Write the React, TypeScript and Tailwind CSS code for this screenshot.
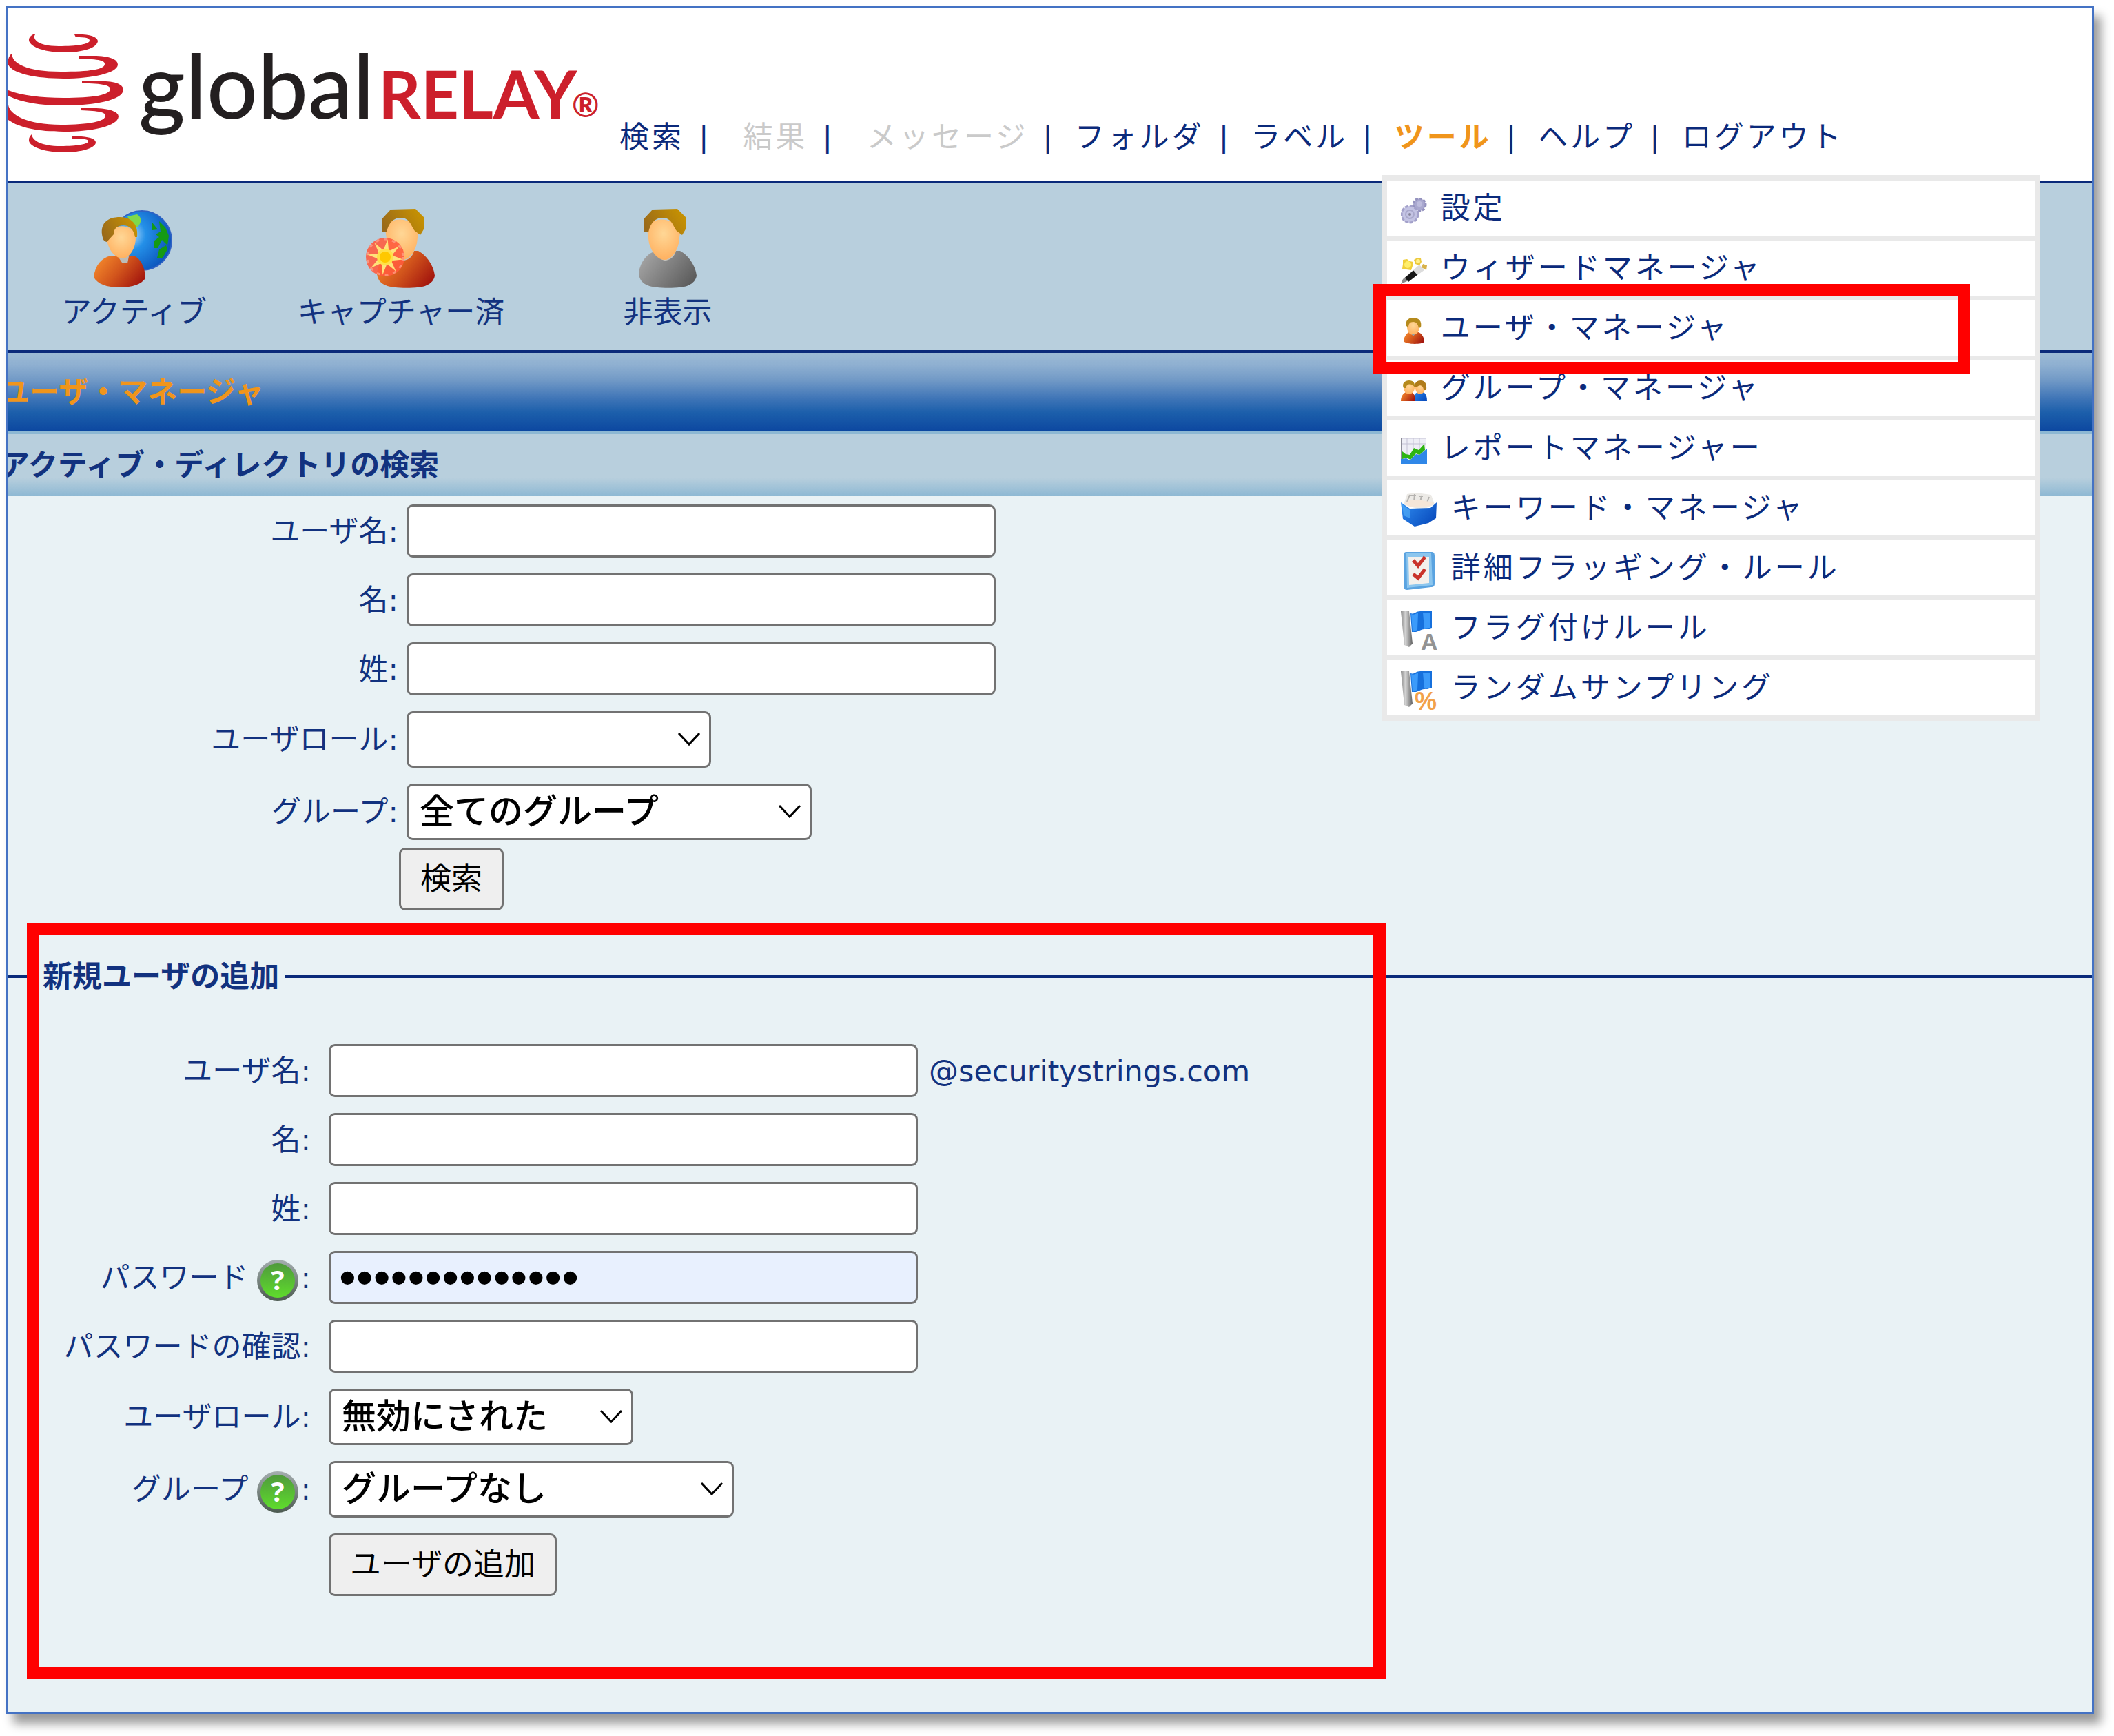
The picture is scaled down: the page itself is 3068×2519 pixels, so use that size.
import type { ReactNode } from "react";

const FONT =
  "font-['DejaVu_Sans','Noto_Sans_CJK_JP',sans-serif]";

/* ---------- logo ---------- */

function Logo() {
  return (
    <svg viewBox="12 12 876 230" className="h-[230px] w-[876px] shrink-0" role="img" aria-label="global RELAY">
      <g fill="#cc1f2b">
        <path d="M108 50 L120 50 C135 51 142 55 142 60 C140 70 120 76 93 76 C60 76 41 66 42 57 C43 53 46 50 52 49 C45 56 55 67 85 67 C112 67 130 64 130 59 C130 55 125 54 110 54Z" />
        <path d="M115 81 L140 81 C162 82 171 87 171 94 C170 106 135 114 92 114 C45 114 5 104 12 86 C13 82 15 79 18 77 C15 90 35 104 88 104 C130 104 152 101 152 93 C152 88 145 86 115 85Z" />
        <path d="M119 118 L150 118 C170 118 180 124 179 131 C177 145 140 153 92 153 C55 153 25 148 5 135 L5 128 C25 138 55 142 92 142 C135 142 160 138 160 129 C160 124 150 121 119 121Z" />
        <path d="M117 156 L140 157 C162 158 172 163 172 169 C171 183 135 191 92 191 C50 191 20 184 5 168 L12 152 C14 167 40 181 88 181 C130 181 153 176 153 168 C153 163 145 161 117 160Z" />
        <path d="M105 198 L118 198 C132 199 139 202 139 207 C138 215 118 221 93 221 C60 221 41 211 42 203 C42 199 44 197 46 195 C47 204 60 212 88 212 C112 212 128 209 128 205 C128 202 122 201 105 201Z" />
      </g>
      <text x="201" y="172" className="font-['Lato',sans-serif] text-[130px] font-medium" fill="#231f20">global</text>
      <text x="549" y="172" className="font-['Lato',sans-serif] text-[96px] font-bold" fill="#cc1f2b">RELAY</text>
      <text x="830" y="170" className="font-['Lato',sans-serif] text-[48px] font-bold" fill="#cc1f2b">®</text>
    </svg>
  );
}

/* ---------- toolbar icons ---------- */

function Defs() {
  return (
    <svg className="absolute size-0" aria-hidden="true">
      <defs>
        <linearGradient id="red-body" x1="0" y1="0.2" x2="1" y2="0.7">
          <stop offset="0" stopColor="#f58a2c" />
          <stop offset="0.5" stopColor="#d2551c" />
          <stop offset="1" stopColor="#a3160e" />
        </linearGradient>
        <linearGradient id="gray-body" x1="0" y1="0.2" x2="1" y2="0.7">
          <stop offset="0" stopColor="#a6a6a6" />
          <stop offset="1" stopColor="#5c5c5c" />
        </linearGradient>
        <linearGradient id="blue-body" x1="0" y1="0" x2="1" y2="0.6">
          <stop offset="0" stopColor="#2f8cf0" />
          <stop offset="1" stopColor="#0b4fc0" />
        </linearGradient>
        <radialGradient id="face" cx="0.5" cy="0.35" r="0.7">
          <stop offset="0" stopColor="#ffd796" />
          <stop offset="1" stopColor="#ffae5c" />
        </radialGradient>
        <linearGradient id="hair" x1="0" y1="0.6" x2="1" y2="0.2">
          <stop offset="0" stopColor="#9a6a1a" />
          <stop offset="1" stopColor="#c99400" />
        </linearGradient>
        <radialGradient id="globe" cx="0.3" cy="0.4" r="0.75">
          <stop offset="0" stopColor="#bfe0fa" />
          <stop offset="0.35" stopColor="#2490e8" />
          <stop offset="1" stopColor="#0a4fb8" />
        </radialGradient>
        <linearGradient id="help" x1="0" y1="0" x2="0" y2="1">
          <stop offset="0" stopColor="#4f9a3c" />
          <stop offset="1" stopColor="#5fdc2c" />
        </linearGradient>
        <linearGradient id="help-rim" x1="0" y1="0" x2="0" y2="1">
          <stop offset="0" stopColor="#a5aeb0" />
          <stop offset="1" stopColor="#4c5a50" />
        </linearGradient>
        <linearGradient id="pole" x1="0" y1="0" x2="1" y2="0">
          <stop offset="0" stopColor="#8a8a8a" />
          <stop offset="0.4" stopColor="#d4d4d4" />
          <stop offset="1" stopColor="#636363" />
        </linearGradient>
      </defs>
    </svg>
  );
}

function Person({ body }: { body: string }) {
  return (
    <g>
      <path d="M0 92 C3 76 12 64 26 61 L60 61 C73 68 83 84 84 97 C83 103 79 108 72 111 C62 116 24 116 13 111 C5 108 0 102 0 92Z" fill={body} />
      <path d="M26 62 L54 61 C52 70 44 75 38 75 C32 74 28 70 26 62Z" fill="#c6c4be" />
      <path d="M12 30 C13 10 56 10 60 34 L58 50 C54 66 45 74 37 74 C28 74 19 64 15 50Z" fill="url(#face)" />
      <path d="M8 34 L8 14 L20 1 L56 0 L69 13 L69 28 L63 38 L55 32 C50 26 48 13 35 13 C24 13 17 20 14 34Z" fill="url(#hair)" />
    </g>
  );
}

function ActiveIcon() {
  return (
    <svg viewBox="14 10 124 120" className="h-[120px] w-[124px]" aria-hidden="true">
      <circle cx="87" cy="59" r="43" fill="url(#globe)" stroke="#2f62c4" strokeWidth="2" />
      <path d="M66 24 L80 21 C88 26 86 34 80 40 L72 36Z" fill="#7fd94c" />
      <path d="M102 33 L110 43 L102 44Z M112 31 L121 40 L126 52 L124 66 L116 58 L110 70 L104 70 L104 60 L112 54 L107 50 L114 46Z M122 66 L124 72 L117 84 L109 84 L112 72Z" fill="#159a14" />
      <path d="M17 112 C19 95 28 84 42 81 L75 81 C87 86 92 102 92 114 C86 122 74 127 55 127 C36 127 22 122 17 112Z" fill="url(#red-body)" />
      <path d="M52 82 L68 82 L66 92 L58 91Z" fill="#bcbcb8" />
      <path d="M36 54 C38 34 76 32 78 54 C78 72 68 85 58 85 C47 84 36 70 36 54Z" fill="url(#face)" />
      <path d="M29 50 C27 33 38 25 55 25 C74 25 82 38 80 54 L77 54 C75 42 68 37 60 37 C51 37 46 42 46 50 L36 61 C31 60 30 56 29 50Z" fill="url(#hair)" />
    </svg>
  );
}

function CapturedIcon() {
  const rays = [0, 45, 90, 135, 180, 225, 270, 315];
  return (
    <svg viewBox="0 0 124 120" className="h-[120px] w-[124px]" aria-hidden="true">
      <g transform="translate(27 3)">
        <Person body="url(#red-body)" />
      </g>
      <circle cx="39" cy="73" r="28" fill="#ff5a3c" fillOpacity="0.88" />
      <circle cx="39" cy="73" r="26" fill="none" stroke="#ffb09a" strokeOpacity="0.6" strokeWidth="3" strokeDasharray="5 7" />
      {rays.map((angle) => (
        <path key={angle} d="M35 64 L39 47 L43 64Z" fill="#ffe27a" transform={`rotate(${angle + 8} 39 73)`} />
      ))}
      <circle cx="39" cy="73" r="12" fill="#ffe04a" />
      <circle cx="39" cy="73" r="8" fill="#ffc800" />
    </svg>
  );
}

function HiddenIcon() {
  return (
    <svg viewBox="0 0 124 120" className="h-[120px] w-[124px]" aria-hidden="true">
      <g transform="translate(20 3)">
        <Person body="url(#gray-body)" />
      </g>
    </svg>
  );
}

/* ---------- menu icons ---------- */

function SmallIcon({ children }: { children: ReactNode }) {
  return (
    <svg viewBox="0 0 38 38" className="mt-2 size-[38px] shrink-0" aria-hidden="true">
      {children}
    </svg>
  );
}

function LargeIcon({ children }: { children: ReactNode }) {
  return (
    <svg viewBox="0 0 53 58" className="mt-2 h-[58px] w-[53px] shrink-0 overflow-visible" aria-hidden="true">
      {children}
    </svg>
  );
}

const gearsIcon = (
  <SmallIcon>
    <circle cx="27" cy="10" r="9" fill="#a9a8cf" />
    <circle cx="27" cy="10" r="9" fill="none" stroke="#9492be" strokeWidth="3" strokeDasharray="4 2" />
    <circle cx="27" cy="9" r="4" fill="#bdbcdd" />
    <circle cx="13" cy="24" r="12" fill="#c3c3e3" stroke="#a3a1ca" strokeWidth="3" strokeDasharray="5 2" />
    <circle cx="13" cy="24" r="6" fill="none" stroke="#a9a8cc" strokeWidth="2" />
    <circle cx="13" cy="24" r="2" fill="#85849a" />
  </SmallIcon>
);

const wandIcon = (
  <SmallIcon>
    <path d="M0 38 L3 31 L17 19 L23 24 L9 34Z" fill="#8b8b8b" />
    <path d="M6 29 L19 18 L25 24 L11 35Z" fill="#161616" />
    <path d="M18 18 L27 10 L34 18 L24 25Z" fill="#dcdcdc" />
    <path d="M9 2 L13 5 L18 6 L17 12 L15 18 L8 17 L2 16 L3 9 L3 3Z" fill="#f0cf3a" />
    <circle cx="10" cy="10" r="5" fill="#ffee6a" />
    <path d="M24 0 L29 1 L30 6 L27 11 L21 9 L19 3Z" fill="#ecc93e" />
    <circle cx="25" cy="5" r="3" fill="#fff08a" />
    <path d="M32 9 L38 11 L37 18 L30 14Z" fill="#d8b24a" />
  </SmallIcon>
);

const userIcon = (
  <SmallIcon>
    <path d="M4 34 C5 25 10 21 15 20 L23 20 C30 22 34 28 34 35 C30 39 8 39 4 34Z" fill="url(#red-body)" />
    <ellipse cx="18" cy="14" rx="9" ry="11" fill="url(#face)" />
    <path d="M8 12 C6 3 12 0 18 0 C26 0 31 5 29 14 L26 15 C25 9 22 6 18 6 C13 6 11 9 11 14Z" fill="#b58a1c" />
    <path d="M15 23 L21 23 L18 27Z" fill="#9aa0a0" />
  </SmallIcon>
);

const groupIcon = (
  <SmallIcon>
    <path d="M17 34 C17 25 22 21 28 20 C34 20 38 24 38 34Z" fill="url(#blue-body)" />
    <ellipse cx="28" cy="15" rx="7" ry="9" fill="url(#face)" />
    <path d="M21 14 C19 7 24 4 29 4 C35 4 38 9 37 18 L33 18 C33 12 28 9 24 13Z" fill="#b07c1a" />
    <path d="M0 34 C0 25 5 21 11 20 C18 20 21 25 21 34Z" fill="url(#red-body)" />
    <ellipse cx="12" cy="15" rx="8" ry="9" fill="url(#face)" />
    <path d="M4 15 C1 8 6 4 12 4 C18 4 21 8 20 14 C17 9 9 7 7 15Z" fill="#b58a1c" />
  </SmallIcon>
);

const reportIcon = (
  <SmallIcon>
    <rect x="0" y="0" width="37" height="37" fill="#eeeef6" />
    <path d="M0 1 H37 M9 0 V30 M18 0 V26 M27 0 V16 M2 9 H37" stroke="#c3c1d4" strokeWidth="1" />
    <path d="M1 0 V37" stroke="#8c8c98" strokeWidth="2" />
    <path d="M0 31 L8 30 L13 33 L22 24 L27 25 L38 16 V38 H0Z" fill="#2f87e8" />
    <path d="M2 20 L7 24 L13 25 L19 15 L26 18 L34 9 L35 18 L27 25 L22 23 L14 32 L8 29 L2 31Z" fill="#2eb512" />
  </SmallIcon>
);

const keywordIcon = (
  <LargeIcon>
    <path d="M4 20 L9 5 L22 3 L44 6 L49 20 L30 28Z" fill="#eceae6" />
    <path d="M9 16 L13 6 M19 16 L20 5 M28 17 L30 7 M38 17 L41 9 M12 7 H22 M26 8 H32" stroke="#b5b3b0" strokeWidth="2" fill="none" />
    <path d="M5 19 L14 24 L44 22 L48 17 L30 14 L12 14Z" fill="#f5e6d8" />
    <path d="M0 17 L13 26 L43 25 L52 17 L51 40 L40 47 L20 52 L3 41Z" fill="url(#blue-body)" />
    <path d="M2 20 L13 28 L13 40 L4 36Z" fill="#58b4fa" fillOpacity="0.6" />
  </LargeIcon>
);

const checklistIcon = (
  <LargeIcon>
    <path d="M8 2 H44 C48 2 49 4 49 8 V48 C49 52 47 53 44 53 L9 57 C5 57 4 54 4 50 V8 C4 4 5 2 8 2Z" fill="#5aa3e0" />
    <path d="M8 4 H44 L46 50 L9 54Z" fill="#8cc6ee" />
    <path d="M11 9 H41 V47 L12 50Z" fill="#f3f0ec" />
    <path d="M18 14 L25 22 L35 9 M18 34 L25 40 L35 27" fill="none" stroke="#c9322a" strokeWidth="5" />
  </LargeIcon>
);

const flag = (
  <>
    <path d="M0 1 L12 1 L17 48 L12 53 L5 50Z" fill="url(#pole)" />
    <path d="M14 4 C20 6 22 0 30 1 H45 V25 L38 27 C32 26 26 30 22 31 L16 31Z" fill="#1670dc" />
    <path d="M15 5 C19 7 22 4 25 4 L24 28 L17 31Z M32 3 H42 V25 L34 26Z" fill="#3c9bfa" />
  </>
);

const flagAIcon = (
  <LargeIcon>
    {flag}
    <text x="29" y="57" className="font-['Liberation_Sans',sans-serif] text-[34px] font-bold" fill="#939393">A</text>
  </LargeIcon>
);

const flagPercentIcon = (
  <LargeIcon>
    {flag}
    <text x="20" y="57" className="font-['Liberation_Sans',sans-serif] text-[36px] font-bold" fill="#f2a24a">%</text>
  </LargeIcon>
);

const menuItems: { label: string; icon: ReactNode; marked?: boolean }[] = [
  { label: "設定", icon: gearsIcon },
  { label: "ウィザードマネージャ", icon: wandIcon },
  { label: "ユーザ・マネージャ", icon: userIcon, marked: true },
  { label: "グループ・マネージャ", icon: groupIcon },
  { label: "レポートマネージャー", icon: reportIcon },
  { label: "キーワード・マネージャ", icon: keywordIcon },
  { label: "詳細フラッギング・ルール", icon: checklistIcon },
  { label: "フラグ付けルール", icon: flagAIcon },
  { label: "ランダムサンプリング", icon: flagPercentIcon },
];

function ToolsMenu() {
  return (
    <ul className="absolute top-[85px] left-[-18px] z-10 flex w-[955px] flex-col gap-[7px] bg-[#e9e9e9] px-[7px] py-2 font-normal text-[#0b2a7b]">
      {menuItems.map((item) => (
        <li key={item.label} className="relative h-[80px] bg-white">
          <a href="#" className="flex h-full items-center gap-5 pl-5 whitespace-nowrap">
            {item.icon}
            <span>{item.label}</span>
          </a>
          {item.marked && (
            <div className="pointer-events-none absolute -top-6 -left-5 z-20 h-[131px] w-[866px] border-[18px] border-[#ff0000]" />
          )}
        </li>
      ))}
    </ul>
  );
}

/* ---------- navigation ---------- */

function Separator() {
  return (
    <span aria-hidden="true" className="mr-7 ml-[21px]">
      |
    </span>
  );
}

function Nav() {
  return (
    <nav className="pb-[33px]">
      <ul className="flex text-[43px] leading-[60px] tracking-[4px] whitespace-nowrap text-[#0b2a7b]">
        <li><a href="#">検索</a><Separator /></li>
        <li className="ml-[18px]"><span className="text-[#cacaca]">結果</span><Separator /></li>
        <li className="ml-[18px]"><span className="text-[#cacaca]">メッセージ</span><Separator /></li>
        <li><a href="#">フォルダ</a><Separator /></li>
        <li><a href="#">ラベル</a><Separator /></li>
        <li className="relative">
          <a href="#" className="font-bold text-[#f0951b]">ツール</a>
          <Separator />
          <ToolsMenu />
        </li>
        <li><a href="#">ヘルプ</a><Separator /></li>
        <li><a href="#">ログアウト</a></li>
      </ul>
    </nav>
  );
}

/* ---------- form parts ---------- */

function HelpIcon() {
  return (
    <svg viewBox="0 0 60 60" className="mt-2 mr-1 ml-3 size-[60px]" aria-hidden="true">
      <circle cx="30" cy="30" r="30" fill="url(#help-rim)" />
      <circle cx="30" cy="30" r="25" fill="url(#help)" />
      <text x="30" y="44" textAnchor="middle" className="font-['Open_Sans',sans-serif] text-[40px] font-bold" fill="#ffffff">?</text>
    </svg>
  );
}

type RowProps = { id: string; label: string; labelClass: string; help?: boolean; children: ReactNode };

function Row({ id, label, labelClass, help, children }: RowProps) {
  return (
    <div className="flex items-center">
      <label htmlFor={id} className={`flex items-center justify-end ${labelClass}`}>
        {label}
        {help && <HelpIcon />}
        <span>:</span>
      </label>
      {children}
    </div>
  );
}

function TextBox({ id, type = "text", value = "" }: { id: string; type?: string; value?: string }) {
  const fill = value ? "bg-[#e8f0fe]" : "bg-white";
  return (
    <input
      id={id}
      type={type}
      defaultValue={value}
      autoComplete="off"
      className={`h-[77px] w-[855px] rounded-[9px] border-[3px] border-[#727272] px-3 font-['Liberation_Sans',sans-serif] text-[71px] leading-[71px] text-black ${fill}`}
    />
  );
}

function Select({ id, option, wide }: { id: string; option: string; wide?: boolean }) {
  const width = wide ? "w-[588px]" : "w-[442px]";
  return (
    <div className={`relative ${width}`}>
      <select
        id={id}
        className="h-[82px] w-full appearance-none rounded-[9px] border-[3px] border-[#727272] bg-white pl-4 text-[50px] leading-[70px] font-medium text-black"
      >
        <option>{option}</option>
      </select>
      <svg viewBox="0 0 34 22" className="pointer-events-none absolute top-[30px] right-[15px] h-[22px] w-[34px]" aria-hidden="true">
        <path d="M2 2 L17 18 L32 2" fill="none" stroke="#000000" strokeWidth="3" />
      </svg>
    </div>
  );
}

const BUTTON =
  "h-[91px] rounded-[9px] border-[3px] border-[#727272] bg-[#efefef] px-7 text-[45px] leading-[60px] text-black";

export default function App() {
  const searchLabel = "w-[566px] mr-3";
  const addLabel = "w-[439px] mr-[26px]";
  return (
    <div className={`min-h-screen overflow-hidden bg-white pt-[9px] pr-[29px] pb-[30px] pl-[9px] ${FONT}`}>
      <Defs />
      <div className="border-[3px] border-[#4472c4] bg-[#e9f2f5] text-[43px] leading-[60px] text-[#12327f] shadow-[10px_14px_14px_rgba(0,0,0,0.4)]">
        <header className="flex items-end bg-white">
          <div className="h-[250px] shrink-0 pr-[11px]">
            <Logo />
          </div>
          <Nav />
        </header>

        <div className="border-y-4 border-[#0a2a7a] bg-[#b8cfdd]">
          <div className="flex h-[242px] gap-[93px] pt-[34px] pl-9">
            {[
              { label: "アクティブ", icon: <ActiveIcon /> },
              { label: "キャプチャー済", icon: <CapturedIcon /> },
              { label: "非表示", icon: <HiddenIcon /> },
            ].map((tool) => (
              <a key={tool.label} href="#" className="flex w-[294px] flex-col items-center gap-[3px] whitespace-nowrap">
                {tool.icon}
                <span>{tool.label}</span>
              </a>
            ))}
          </div>
        </div>

        <div className="flex h-[114px] items-center overflow-hidden bg-[linear-gradient(#9bbad5_0%,#8fb0d1_15%,#7199c6_35%,#3f75b7_58%,#1c5fab_76%,#0c47a0_100%)]">
          <h1 className="-ml-3 font-bold text-[#f0951b]">ユーザ・マネージャ</h1>
        </div>
        <div className="flex h-[94px] items-center overflow-hidden border-t-4 border-[#8db8d3] bg-[linear-gradient(#b8cfdd_0%,#b8cfdd_70%,#8db8d3_100%)]">
          <h2 className="-ml-3 font-bold">アクティブ・ディレクトリの検索</h2>
        </div>

        <form className="flex flex-col gap-[23px] pt-3">
          <Row id="s-user" label="ユーザ名" labelClass={searchLabel}><TextBox id="s-user" /></Row>
          <Row id="s-first" label="名" labelClass={searchLabel}><TextBox id="s-first" /></Row>
          <Row id="s-last" label="姓" labelClass={searchLabel}><TextBox id="s-last" /></Row>
          <Row id="s-role" label="ユーザロール" labelClass={searchLabel}><Select id="s-role" option="" /></Row>
          <Row id="s-group" label="グループ" labelClass={searchLabel}><Select id="s-group" option="全てのグループ" wide /></Row>
          <div className="-mt-3 pl-[567px]">
            <button type="button" className={BUTTON}>検索</button>
          </div>
        </form>

        <form className="relative mt-[66px]">
          <fieldset className="border-t-4 border-[#0a2a7a] pb-[168px]">
            <legend className="ml-[42px] px-2 font-bold">新規ユーザの追加</legend>
            <div className="flex flex-col gap-[23px] pt-[68px]">
              <Row id="a-user" label="ユーザ名" labelClass={addLabel}>
                <TextBox id="a-user" />
                <span className="ml-4">@securitystrings.com</span>
              </Row>
              <Row id="a-first" label="名" labelClass={addLabel}><TextBox id="a-first" /></Row>
              <Row id="a-last" label="姓" labelClass={addLabel}><TextBox id="a-last" /></Row>
              <Row id="a-pass" label="パスワード" labelClass={addLabel} help><TextBox id="a-pass" type="password" value="12345678901234" /></Row>
              <Row id="a-pass2" label="パスワードの確認" labelClass={addLabel}><TextBox id="a-pass2" type="password" /></Row>
              <Row id="a-role" label="ユーザロール" labelClass={addLabel}><Select id="a-role" option="無効にされた" /></Row>
              <Row id="a-group" label="グループ" labelClass={addLabel} help><Select id="a-group" option="グループなし" wide /></Row>
              <div className="pl-[465px]">
                <button type="button" className={BUTTON}>ユーザの追加</button>
              </div>
            </div>
          </fieldset>
          <div className="pointer-events-none absolute -top-12 bottom-[47px] left-[27px] w-[1972px] border-[18px] border-[#ff0000]" />
        </form>
      </div>
    </div>
  );
}
